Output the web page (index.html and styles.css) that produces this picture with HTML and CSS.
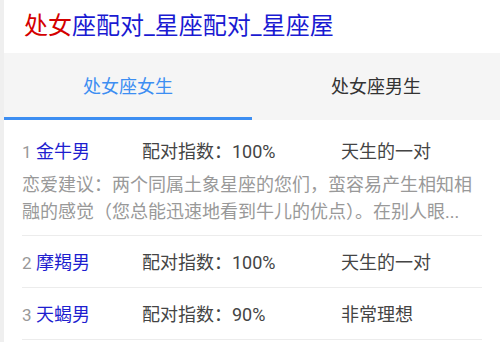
FILE: index.html
```html
<!DOCTYPE html>
<html lang="zh-CN">
<head>
    <meta charset="UTF-8">
    <title>处女座配对_星座配对_星座屋</title>
    <link rel="stylesheet" href="styles.css">
</head>
<body>
    <div class="page">
        <h1 class="judul"><span class="merah">处女</span>座配对_星座配对_星座屋</h1>
        <div class="tabs">
            <div class="tab aktif">处女座女生</div>
            <div class="tab">处女座男生</div>
        </div>
        <ul class="daftar">
            <li class="item">
                <div class="baris">
                    <div class="nama"><span class="no">1</span> 金牛男</div>
                    <div class="skor">配对指数：100%</div>
                    <div class="ket">天生的一对</div>
                </div>
                <p class="saran">恋爱建议：两个同属土象星座的您们，蛮容易产生相知相融的感觉（您总能迅速地看到牛儿的优点）。在别人眼...</p>
            </li>
            <li class="item">
                <div class="baris">
                    <div class="nama"><span class="no">2</span> 摩羯男</div>
                    <div class="skor">配对指数：100%</div>
                    <div class="ket">天生的一对</div>
                </div>
            </li>
            <li class="item">
                <div class="baris">
                    <div class="nama"><span class="no">3</span> 天蝎男</div>
                    <div class="skor">配对指数：90%</div>
                    <div class="ket">非常理想</div>
                </div>
            </li>
        </ul>
    </div>
</body>
</html>
```

FILE: styles.css
```css
body {
    margin: 0;
    padding: 0;
    background: #efefef;
    font-family: Roboto, "Noto Sans CJK SC", sans-serif;
}
.page {
    margin-left: 4px;
    background: #fff;
    min-height: 342px;
}
.judul {
    margin: 0;
    height: 53px;
    line-height: 53px;
    padding-left: 20px;
    font-size: 24px;
    font-weight: normal;
    color: #1a1ad2;
}
.merah {
    color: #d40000;
}
.tabs {
    display: flex;
    background: #f5f5f5;
    height: 67px;
}
.tab {
    flex: 1;
    display: flex;
    align-items: center;
    justify-content: center;
    font-size: 18px;
    color: #333;
    padding-bottom: 3px;
}
.tab.aktif {
    color: #3d8ef2;
    padding-bottom: 0;
    border-bottom: 3px solid #3d8ef2;
}
.daftar {
    list-style: none;
    margin: 0;
    padding: 5px 18px 0 18px;
}
.item {
    border-bottom: 1px solid #ececec;
    padding: 14px 0 11px 0;
}
.item:first-child {
    padding-bottom: 10px;
}
.baris {
    display: grid;
    grid-template-columns: 120px 199px 1fr;
    font-size: 18px;
    line-height: 26px;
    color: #444;
}
.nama {
    color: #1e1ecf;
}
.no {
    color: #999;
    font-size: 17px;
}
.saran {
    margin: 6px 0 0 0;
    font-size: 18px;
    line-height: 27px;
    color: #999;
}
```
